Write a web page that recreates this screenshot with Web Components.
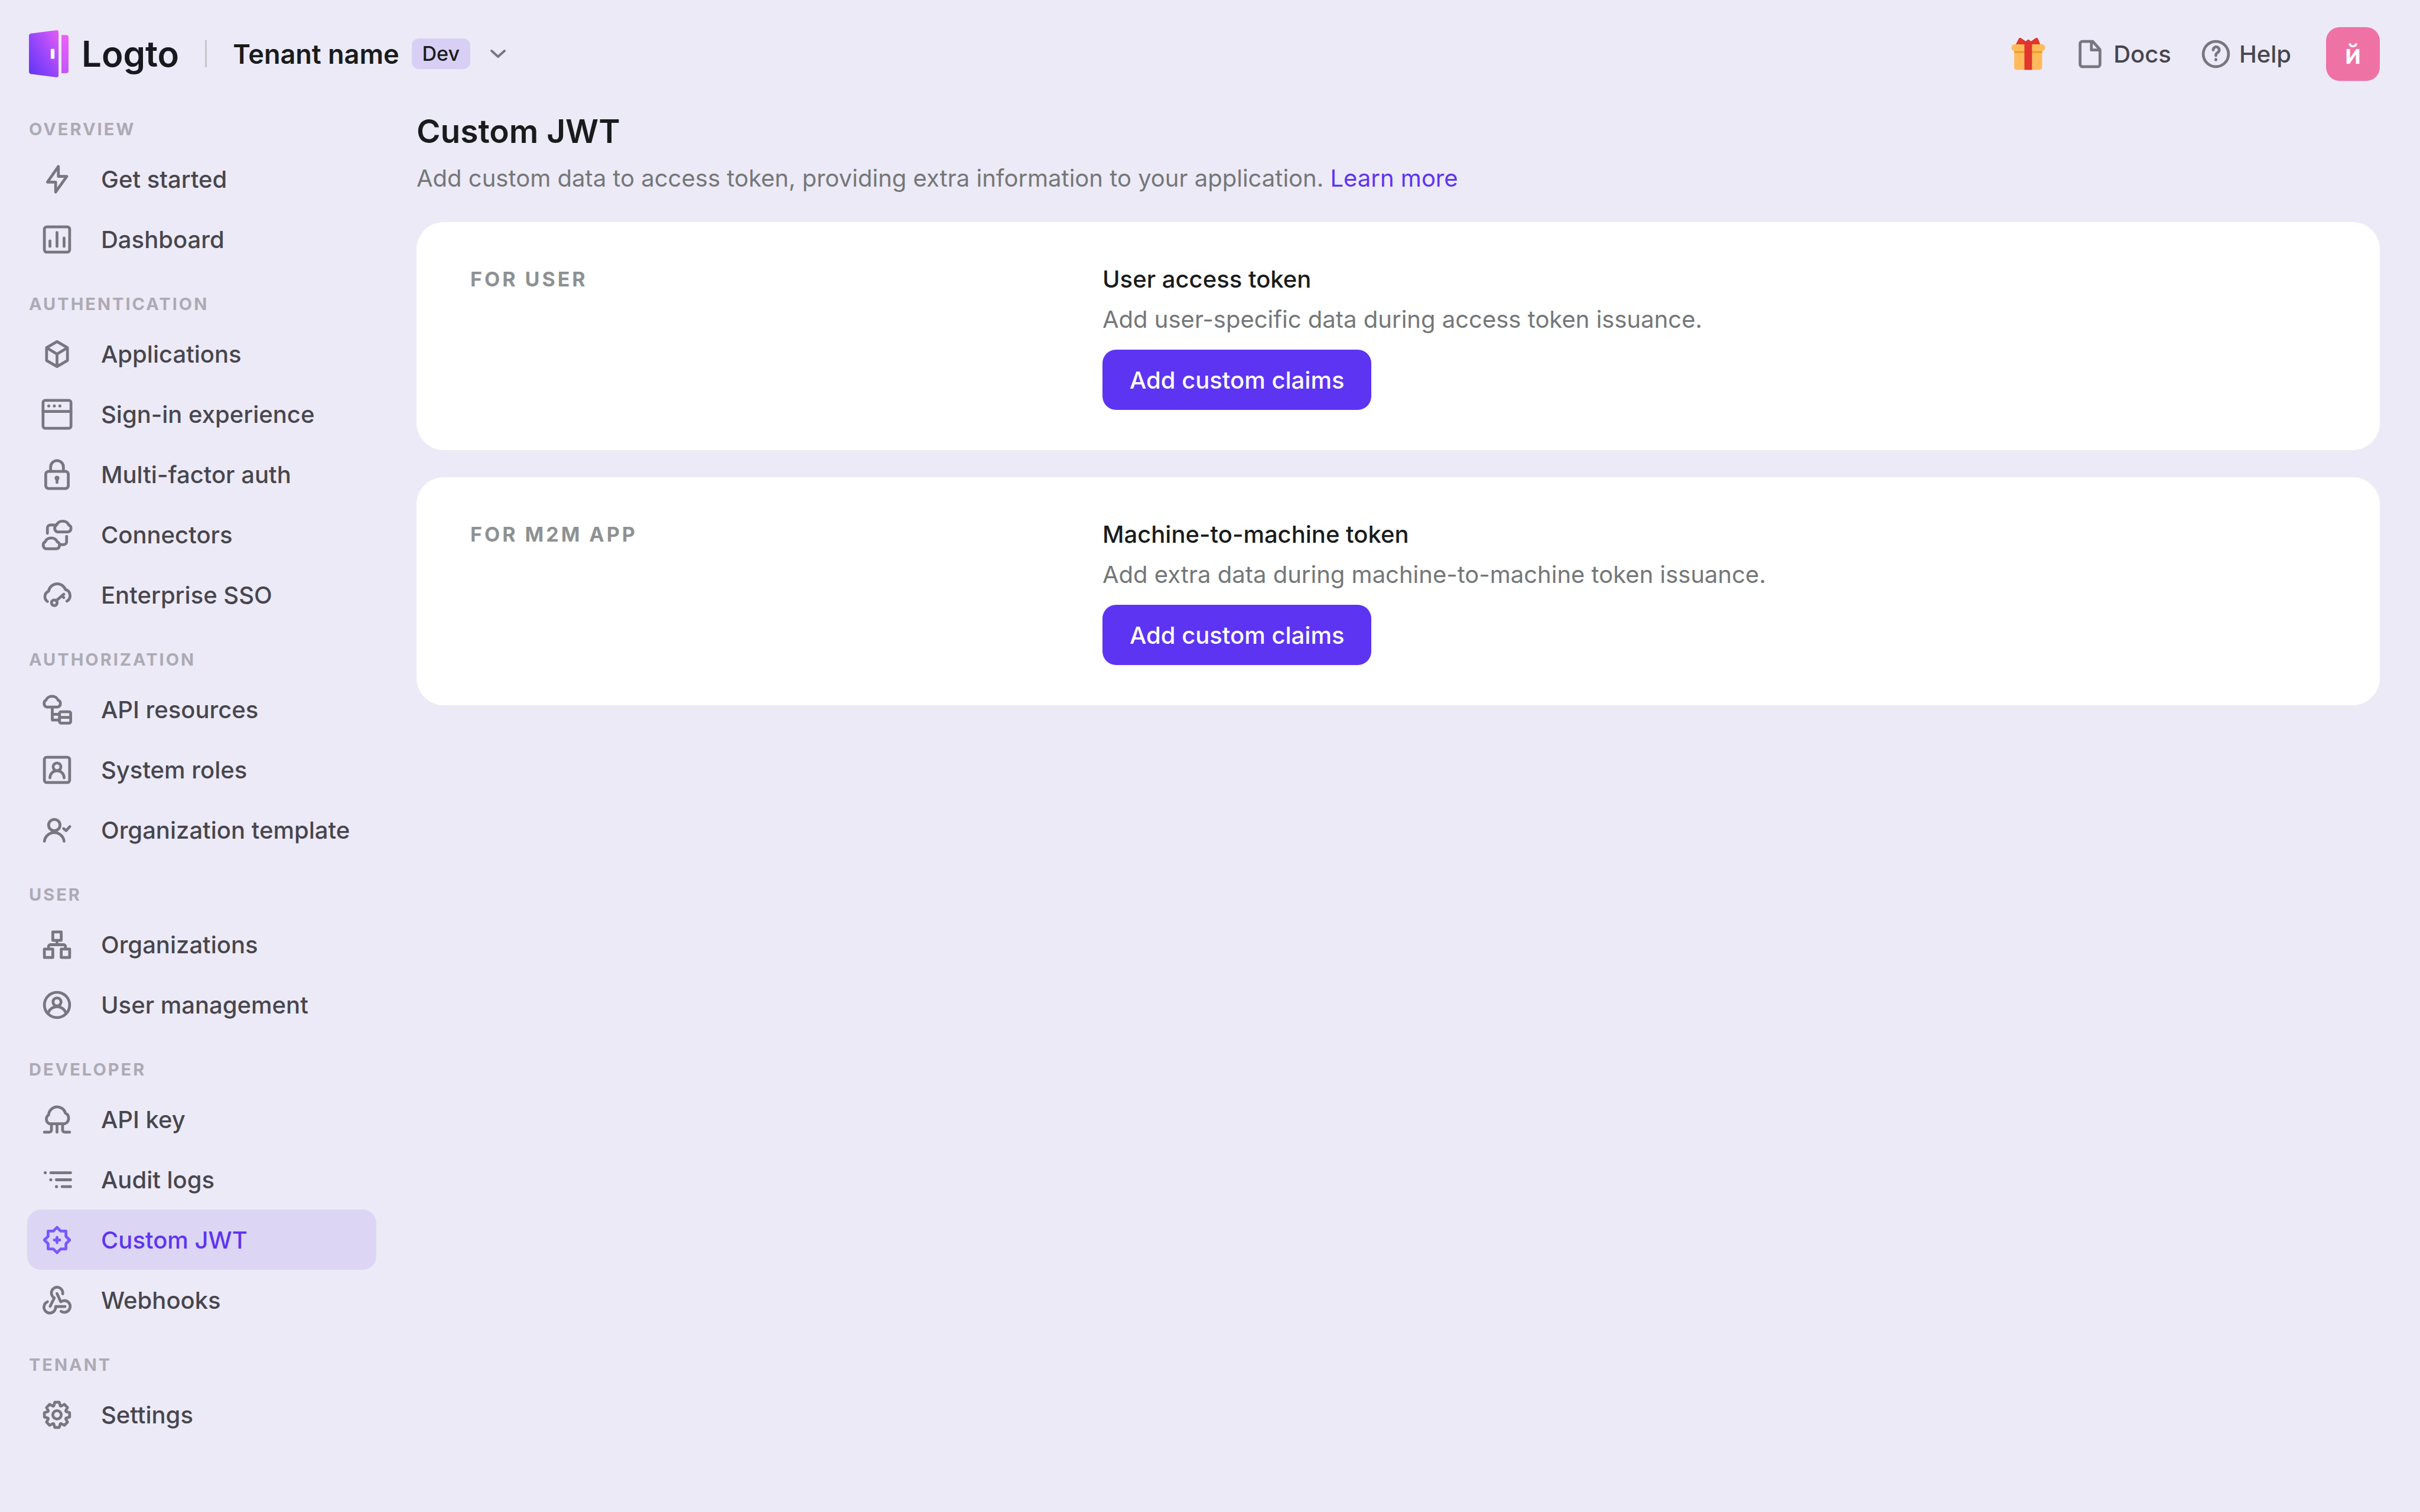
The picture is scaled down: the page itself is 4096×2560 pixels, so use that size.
<!DOCTYPE html>
<html lang="en">
<head>
<meta charset="utf-8">
<title>Custom JWT - Logto Console</title>
<style>
  html, body { margin: 0; min-height: 100%; background: #eceaf6; }
  body {
    --surface: #ffffff;
    --text: #191c1d;
    --text-secondary: #747778;
    --label: #8e9192;
    --nav-text: #47464e;
    --nav-icon: #78767f;
    --nav-title: #adaab4;
    --primary: #5d34f2;
    --primary-soft: #7958ff;
    --active: #dcd6f4;
    --divider: #c4c7c7;
    --gutter: 68px;
    --radius: 23px;
    font: 500 40px/57px Inter, "Liberation Sans", sans-serif;
    color: var(--text);
  }
</style>
</head>
<body>
<console-app>
  <console-header slot="header"></console-header>
  <console-sidebar slot="sidebar">
    <nav-section heading="Overview">
      <nav-item icon="bolt">Get started</nav-item>
      <nav-item icon="chart">Dashboard</nav-item>
    </nav-section>
    <nav-section heading="Authentication">
      <nav-item icon="box">Applications</nav-item>
      <nav-item icon="web">Sign-in experience</nav-item>
      <nav-item icon="lock">Multi-factor auth</nav-item>
      <nav-item icon="connectors">Connectors</nav-item>
      <nav-item icon="sso">Enterprise SSO</nav-item>
    </nav-section>
    <nav-section heading="Authorization">
      <nav-item icon="resources">API resources</nav-item>
      <nav-item icon="roles">System roles</nav-item>
      <nav-item icon="template">Organization template</nav-item>
    </nav-section>
    <nav-section heading="User">
      <nav-item icon="organizations">Organizations</nav-item>
      <nav-item icon="user">User management</nav-item>
    </nav-section>
    <nav-section heading="Developer">
      <nav-item icon="cloud">API key</nav-item>
      <nav-item icon="list">Audit logs</nav-item>
      <nav-item icon="jwt" active>Custom JWT</nav-item>
      <nav-item icon="hook">Webhooks</nav-item>
    </nav-section>
    <nav-section heading="Tenant">
      <nav-item icon="gear">Settings</nav-item>
    </nav-section>
  </console-sidebar>
  <page-heading heading="Custom JWT">Add custom data to access token, providing extra information to your application. <a slot="link" href="#learn-more">Learn more</a></page-heading>
  <token-card label="For user" heading="User access token">
    Add user-specific data during access token issuance.
    <primary-button slot="action">Add custom claims</primary-button>
  </token-card>
  <token-card label="For M2M app" heading="Machine-to-machine token">
    Add extra data during machine-to-machine token issuance.
    <primary-button slot="action">Add custom claims</primary-button>
  </token-card>
</console-app>

<script>
  /* Closed outline of an eight-toothed cog on the 20-unit grid. */
  function cogPath() {
    const pts = [];
    for (let i = 0; i < 8; i++) {
      for (const [off, r] of [[-20, 5.7], [-10, 7.6], [10, 7.6], [20, 5.7]]) {
        const a = (i * 45 + off - 90) * Math.PI / 180;
        pts.push((10 + r * Math.cos(a)).toFixed(2) + ' ' + (10 + r * Math.sin(a)).toFixed(2));
      }
    }
    return 'M' + pts.join('L') + 'Z';
  }

  const dot = (x, y, r) => `<circle cx="${x}" cy="${y}" r="${r}" fill="currentColor" stroke="none"/>`;
  const smallCloud = 'M10.2 8.3A2.3 2.3 0 0 1 9.8 4.1A3.7 3.1 0 0 1 16.9 4.1A2.2 2.2 0 0 1 16.6 8.3Z';

  const ICONS = {
    bolt: '<path d="M10.8 2.4V8.3H15.8L9.2 17.6V11.7H4.3Z"/>',
    chart: '<rect x="2.5" y="2.5" width="15" height="15" rx="1.4"/><path d="M5.8 10.8V14.1M10 5.8V14.1M14.2 9.1V14.1"/>',
    box: '<path d="M10 2.6L16.2 6.2V13.8L10 17.4L3.8 13.8V6.2ZM3.8 6.2L10 10L16.2 6.2M10 10V17.4"/>',
    web: '<rect x="1.7" y="1.7" width="16.6" height="16.6" rx="1.3"/><path d="M1.7 8.3H18.3"/>' + dot(5.1, 5, .9) + dot(8.4, 5, .9) + dot(11.7, 5, .9),
    lock: '<rect x="3.3" y="8.1" width="13.4" height="10.2" rx="1.7"/><path d="M6.2 8V5.5A3.8 3.8 0 0 1 13.8 5.5V8"/><path d="M10 12.4V14.7"/>' + dot(10, 12.1, 1.4),
    connectors: `<path d="${smallCloud}"/><path d="${smallCloud}" transform="translate(-6.8 10)"/><path d="M9 4.2H6A1.7 1.7 0 0 0 4.3 5.9V9.1M11.6 15.8H14A1.7 1.7 0 0 0 15.7 14.1V10.9"/>`,
    sso: '<path d="M4.3 13.8A3.5 3.5 0 0 1 5 7.7A5.2 5.2 0 0 1 15 6.7A3.8 3.8 0 0 1 15.9 13.6"/><circle cx="8.4" cy="14.6" r="1.7"/><path d="M9.6 13.3L14 9.5M12.9 10.5L14 11.5"/>',
    resources: `<path d="${smallCloud}" transform="translate(-6.3 .2)"/><path d="M7.2 8.6V16.2H11.4M7.2 12.8H11.4"/><rect x="11.5" y="11.3" width="6.6" height="6.7" rx=".8"/><path d="M11.5 14.6H18.1"/>`,
    roles: '<rect x="2.5" y="2.5" width="15" height="15" rx="1.4"/><circle cx="10" cy="8.2" r="2.3"/><path d="M5.8 14.7A4.2 4.2 0 0 1 14.2 14.7"/>',
    template: '<circle cx="8.4" cy="7" r="3.4"/><path d="M2.5 16.6A5.9 5.9 0 0 1 14.2 16.6M13.9 9.1L15.4 10.3L17.6 7.9"/>',
    organizations: '<rect x="7.5" y="2.4" width="5" height="5"/><rect x="2.5" y="12.6" width="5" height="5"/><rect x="12.5" y="12.6" width="5" height="5"/><path d="M10 7.5V10M5 12.4V11A1 1 0 0 1 6 10H14A1 1 0 0 1 15 11V12.4"/>',
    user: '<circle cx="10" cy="10" r="7.5"/><circle cx="10" cy="8.2" r="2.4"/><path d="M4.7 14.8A5.6 5.6 0 0 1 15.3 14.8"/>',
    cloud: '<path d="M5.4 12.5A3 3 0 0 1 5 7.3A5.1 5.1 0 0 1 15 6.2A3.4 3.4 0 0 1 14.5 12.5ZM10 12.5V17.5M6.7 12.5V16.2A1.3 1.3 0 0 1 5.4 17.5H2.5M13.3 12.5V16.2A1.3 1.3 0 0 0 14.6 17.5H17.5"/>',
    list: '<path d="M6.3 5.8H18.1M9.6 10H18.1M13 14.1H18.1"/>' + dot(3, 5.8, .9) + dot(6.3, 10, .9) + dot(9.7, 14.1, .9),
    jwt: '<path d="M10 2.5L12.2 4.7H15.3V7.8L17.5 10L15.3 12.2V15.3H12.2L10 17.5L7.8 15.3H4.7V12.2L2.5 10L4.7 7.8V4.7H7.8ZM10 8.4V11.6M8.4 10H11.6"/>',
    hook: '<path d="M13.4 6.2A3.4 3.4 0 1 0 8.4 8.6L5.9 13.6"/><path d="M4.3 10.9A3.5 3.5 0 1 0 9.2 13.7H14.8"/><path d="M10 6L12.2 10.9A3.5 3.5 0 1 1 12.4 16.6"/>',
    gear: `<path d="${cogPath()}"/><circle cx="10" cy="10" r="2.5"/>`,
    doc: '<path d="M11.6 2.5H5.5A1.4 1.4 0 0 0 4.1 3.9V16.1A1.4 1.4 0 0 0 5.5 17.5H14.5A1.4 1.4 0 0 0 15.9 16.1V7.3ZM10.8 2.8V7.6H15.6"/>',
    help: '<circle cx="10" cy="10" r="7.5"/><path d="M8.4 7.6A1.8 1.8 0 1 1 10.9 9.2Q10 9.7 10 10.9"/>' + dot(10, 13.3, .9)
  };

  /* Registers an element whose shadow root is filled from an HTML string. */
  function define(name, render) {
    customElements.define(name, class extends HTMLElement {
      constructor() {
        super();
        this.attachShadow({ mode: 'open' });
      }
      connectedCallback() {
        const template = document.createElement('template');
        template.innerHTML = render(this);
        this.shadowRoot.replaceChildren(template.content.cloneNode(true));
      }
    });
  }

  define('line-icon', el => `
    <style>
      :host { display: block; flex: none; width: 57px; height: 57px; color: var(--nav-icon); }
      svg { display: block; width: 100%; height: 100%; fill: none; stroke: currentColor; stroke-width: 1.67; stroke-linecap: round; stroke-linejoin: round; }
    </style>
    <svg viewBox="0 0 20 20" aria-hidden="true">${ICONS[el.getAttribute('name')]}</svg>`);

  define('console-app', () => `
    <style>
      :host { display: flex; flex-direction: column; min-height: 100vh; }
      .body { display: flex; flex: 1; }
      main { flex: 1; min-width: 0; display: flex; flex-direction: column; gap: 46px; padding-right: var(--gutter); }
    </style>
    <slot name="header"></slot>
    <div class="body">
      <slot name="sidebar"></slot>
      <main><slot></slot></main>
    </div>`);

  define('logto-logo', () => `
    <style>
      :host { display: flex; align-items: center; gap: 22px; font-size: 60px; line-height: 80px; font-weight: 600; color: #18181f; }
      svg { display: block; width: 67px; height: 80px; }
    </style>
    <svg viewBox="0 0 70.4 84" aria-hidden="true">
      <defs>
        <linearGradient id="door" x1="0" y1="1" x2="1" y2="0">
          <stop offset="0" stop-color="#5d34f2"/><stop offset=".45" stop-color="#9345fb"/><stop offset="1" stop-color="#e55df6"/>
        </linearGradient>
        <linearGradient id="frame" x1="0" y1="0" x2="0" y2="1">
          <stop offset="0" stop-color="#ed60fa"/><stop offset="1" stop-color="#c257f7"/>
        </linearGradient>
      </defs>
      <path fill="url(#door)" d="M0 10.5Q0 7 3.4 6L48 .2Q52.6-.6 52.6 4V80Q52.6 84.6 48 83.8L3.4 78Q0 77 0 73.5Z"/>
      <path fill="url(#frame)" d="M57.8 8.7H66Q70.4 8.7 70.4 13V72.4Q70.4 76.7 66 76.7H57.8Z"/>
      <rect x="38.8" y="33.2" width="6.6" height="17.6" rx="1" fill="#fff"/>
    </svg>
    <span>Logto</span>`);

  define('tenant-selector', () => `
    <style>
      :host { display: block; }
      button { display: flex; align-items: center; margin: 0; padding: 0; border: 0; background: none; font: inherit; color: inherit; cursor: pointer; }
      .name { font-size: 45px; font-weight: 600; }
      .tag { margin-left: 21px; padding: 0 18px; border-radius: 12px; background: #d8d0f4; font-size: 34px; line-height: 52px; }
      svg { display: block; width: 28px; height: 18px; margin-left: 33px; fill: none; stroke: var(--nav-icon); stroke-width: 4; stroke-linecap: round; stroke-linejoin: round; }
    </style>
    <button type="button" aria-haspopup="true">
      <span class="name">Tenant name</span>
      <span class="tag">Dev</span>
      <svg viewBox="0 0 28 18" aria-hidden="true"><path d="M3 4L14 14L25 4"/></svg>
    </button>`);

  define('gift-button', () => `
    <style>
      :host { display: block; }
      button { display: block; margin: 0; padding: 0; border: 0; background: none; cursor: pointer; }
      svg { display: block; width: 58px; height: 56px; }
    </style>
    <button type="button" aria-label="Offers">
      <svg viewBox="0 0 62 59" aria-hidden="true">
        <path fill="#ffba5c" d="M5.5 22H56V53.5Q56 58.5 51 58.5H10.5Q5.5 58.5 5.5 53.5Z"/>
        <path fill="#e79b1c" d="M5.5 22H56V28H5.5Z"/>
        <rect x=".5" y="12" width="61" height="13" rx="6.5" fill="#ffba5c"/>
        <path fill="#df362d" d="M8.5 12.5L13.2 3Q15.4-.6 18.8 1.6L27 7.5Q31-.2 35 7.5L43.6 1.6Q47-.6 49 3L52.5 12.5H37.7V58.5H24V12.5Z"/>
        <path fill="#df362d" d="M25 11V9.5Q25 5.5 31 5.5T37 9.5V11Z"/>
      </svg>
    </button>`);

  define('header-link', el => `
    <style>
      :host { display: block; }
      a { display: flex; align-items: center; gap: 11px; color: var(--nav-text); text-decoration: none; }
    </style>
    <a href="#${el.getAttribute('icon')}"><line-icon name="${el.getAttribute('icon')}"></line-icon><slot></slot></a>`);

  define('user-avatar', () => `
    <style>
      :host { display: block; margin-left: 12px; }
      button { display: block; width: 91px; height: 91px; margin: 0; padding: 0; border: 0; border-radius: var(--radius); background: #ee73a4; color: #fff; font: inherit; font-size: 45px; font-weight: 600; cursor: pointer; }
    </style>
    <button type="button">й</button>`);

  define('console-header', () => `
    <style>
      :host { display: block; }
      header { display: flex; align-items: center; height: 182px; padding: 0 var(--gutter) 0 49px; }
      .divider { width: 3px; height: 46px; margin: 0 44px; background: var(--divider); }
      .actions { display: flex; align-items: center; gap: 47px; margin-left: auto; }
    </style>
    <header>
      <logto-logo></logto-logo>
      <div class="divider"></div>
      <tenant-selector></tenant-selector>
      <div class="actions">
        <gift-button></gift-button>
        <header-link icon="doc">Docs</header-link>
        <header-link icon="help">Help</header-link>
        <user-avatar></user-avatar>
      </div>
    </header>`);

  define('console-sidebar', () => `
    <style>
      :host { display: block; flex: none; width: 591px; padding: 4px var(--gutter) 68px 46px; }
      nav { display: flex; flex-direction: column; gap: 26px; }
    </style>
    <nav><slot></slot></nav>`);

  define('nav-section', el => `
    <style>
      :host { display: block; }
      h2 { margin: 0; padding-left: 3px; font-size: 29px; line-height: 66px; font-weight: 700; letter-spacing: 3px; text-transform: uppercase; color: var(--nav-title); }
    </style>
    <h2>${el.getAttribute('heading')}</h2>
    <slot></slot>`);

  define('nav-item', el => `
    <style>
      :host { display: block; }
      a { display: flex; align-items: center; gap: 46px; height: 102px; padding: 0 22px; border-radius: var(--radius); color: var(--nav-text); text-decoration: none; white-space: nowrap; }
      a[aria-current] { background: var(--active); color: var(--primary); --nav-icon: var(--primary-soft); }
    </style>
    <a href="#${el.getAttribute('icon')}"${el.hasAttribute('active') ? ' aria-current="page"' : ''}><line-icon name="${el.getAttribute('icon')}"></line-icon><slot></slot></a>`);

  define('page-heading', el => `
    <style>
      :host { display: block; }
      h1 { margin: 0 0 11px; font-size: 55px; line-height: 80px; font-weight: 600; }
      p { margin: 0; font-weight: 400; color: var(--text-secondary); }
      ::slotted(a) { color: var(--primary); text-decoration: none; }
    </style>
    <h1>${el.getAttribute('heading')}</h1>
    <p><slot></slot><slot name="link"></slot></p>`);

  define('token-card', el => `
    <style>
      :host { display: block; }
      section { display: grid; grid-template-columns: minmax(0, 1002px) 1fr; column-gap: var(--gutter); padding: 68px 91px; border-radius: 46px; background: var(--surface); }
      .label { font-size: 34px; font-weight: 700; letter-spacing: 4px; text-transform: uppercase; color: var(--label); }
      h2 { margin: 0 0 11px; font: inherit; }
      p { margin: 0 0 23px; font-weight: 400; color: var(--text-secondary); }
    </style>
    <section>
      <div class="label">${el.getAttribute('label')}</div>
      <div>
        <h2>${el.getAttribute('heading')}</h2>
        <p><slot></slot></p>
        <slot name="action"></slot>
      </div>
    </section>`);

  define('primary-button', () => `
    <style>
      :host { display: block; }
      button { display: block; height: 102px; margin: 0; padding: 0 46px; border: 0; border-radius: var(--radius); background: var(--primary); color: #fff; font: inherit; cursor: pointer; }
    </style>
    <button type="button"><slot></slot></button>`);
</script>
</body>
</html>
